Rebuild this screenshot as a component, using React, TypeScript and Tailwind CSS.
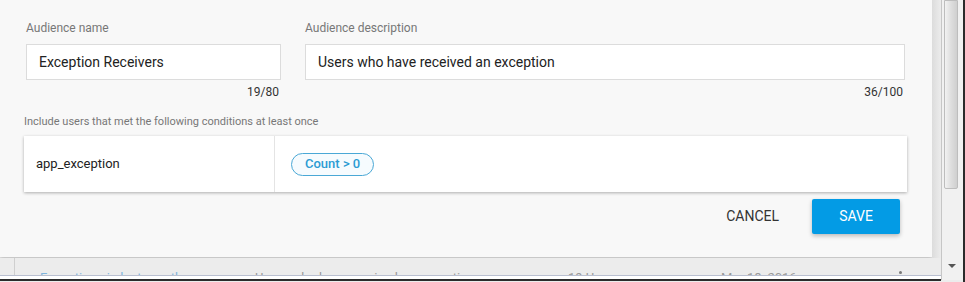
import React from "react";

const font = { fontFamily: "Roboto, 'Noto Sans', sans-serif" };

const Field = ({ label, value, count, width }: { label: string; value: string; count: string; width: string }) => (
  <div className={`flex flex-col ${width}`}>
    <span className="text-[12px] leading-[16px] text-[#777]">{label}</span>
    <div className="mt-[8px] h-[36px] border border-[#dcdcdc] bg-white flex items-center px-[12px]">
      <span className="text-[14px] text-[#222]">{value}</span>
    </div>
    <span className="mt-[4px] self-end pr-[2px] text-[12px] leading-[16px] text-[#333]">{count}</span>
  </div>
);

// the list page behind the dialog, only its top edge peeks out
const BehindRow = () => (
  <div className="h-[24px] bg-[#ececec] flex flex-col">
    <div className="flex h-[18px] border-b border-[#b9bfd0] overflow-hidden">
      <div className="w-[15px] border-r border-[#cfcfcf]" />
      <div className="flex-1 flex items-start pt-[12px] pl-[25px] text-[13px] leading-[16px] text-[#999]">
        <span className="w-[215px] text-[#7fb4dc]">Exceptions in last month</span>
        <span className="w-[313px]">Users who have received an exception</span>
        <span className="w-[153px]">19 Users</span>
        <span className="w-[178px]">Mar 18, 2016</span>
        <span className="mt-[1px] h-[3px] w-[3px] rounded-full bg-[#777]" />
      </div>
    </div>
    <div className="h-[3px] bg-white" />
    <div className="h-[2px] bg-[#2b2b2b]" />
  </div>
);

const Scrollbar = () => (
  <div className="w-[24px] h-[282px] flex">
    <div className="w-[22px] h-[280px] bg-[#f1f1f1] border-l border-[#c6c6c6] relative">
      <div className="absolute left-[2px] top-0 w-[14px] h-[189px] rounded-b-[2px] border border-[#bdbdbd] bg-gradient-to-r from-[#f2f2f2] via-[#dedede] to-[#cfcfcf]" />
      <div className="absolute left-[6px] top-[264px] w-0 h-0 border-l-[4px] border-r-[4px] border-t-[4px] border-l-transparent border-r-transparent border-t-[#555]" />
    </div>
    <div className="w-[2px] bg-[#2b2b2b]" />
  </div>
);

export default function App() {
  return (
    <div className="w-[965px] h-[282px] overflow-hidden flex bg-[#ececec]" style={font}>
      <div className="flex flex-col w-[941px]">
        <div className="flex h-[258px]">
          <div className="w-[932px] h-[257px] bg-[#f8f8f8] shadow-[0_1px_4px_rgba(0,0,0,0.25)] flex flex-col pt-[20px] pl-[24px] pr-[25px]">
            <div className="flex gap-[24px] pl-[2px]">
              <Field label="Audience name" value="Exception Receivers" count="19/80" width="w-[255px]" />
              <Field label="Audience description" value="Users who have received an exception" count="36/100" width="w-[600px]" />
            </div>
            <span className="mt-[14px] text-[11px] leading-[16px] text-[#777]">
              Include users that met the following conditions at least once
            </span>
            <div className="mt-[6px] h-[56px] shrink-0 w-[883px] bg-white flex shadow-[0_1px_3px_rgba(0,0,0,0.3)]">
              <div className="w-[251px] border-r border-[#e4e4e4] flex items-center pl-[12px]">
                <span className="text-[13px] text-[#222]">app_exception</span>
              </div>
              <div className="flex items-center pl-[16px]">
                <span className="h-[23px] px-[13px] rounded-full border border-[#4aa8d6] bg-[#f6fbfe] flex items-center text-[13px] font-medium text-[#2c9bd3]">
                  Count &gt; 0
                </span>
              </div>
            </div>
            <div className="mt-[6px] flex justify-end items-center gap-[16px] pr-[7px]">
              <button className="h-[36px] px-[17px] text-[14px] text-[#333]">CANCEL</button>
              <button className="h-[35px] w-[88px] rounded-[2px] bg-[#039be5] text-[14px] text-white shadow-[0_2px_4px_rgba(0,0,0,0.25)]">
                SAVE
              </button>
            </div>
          </div>
          <div className="w-[9px] bg-gradient-to-r from-[#dcdcdc] to-[#ececec]" />
        </div>
        <BehindRow />
      </div>
      <Scrollbar />
    </div>
  );
}
